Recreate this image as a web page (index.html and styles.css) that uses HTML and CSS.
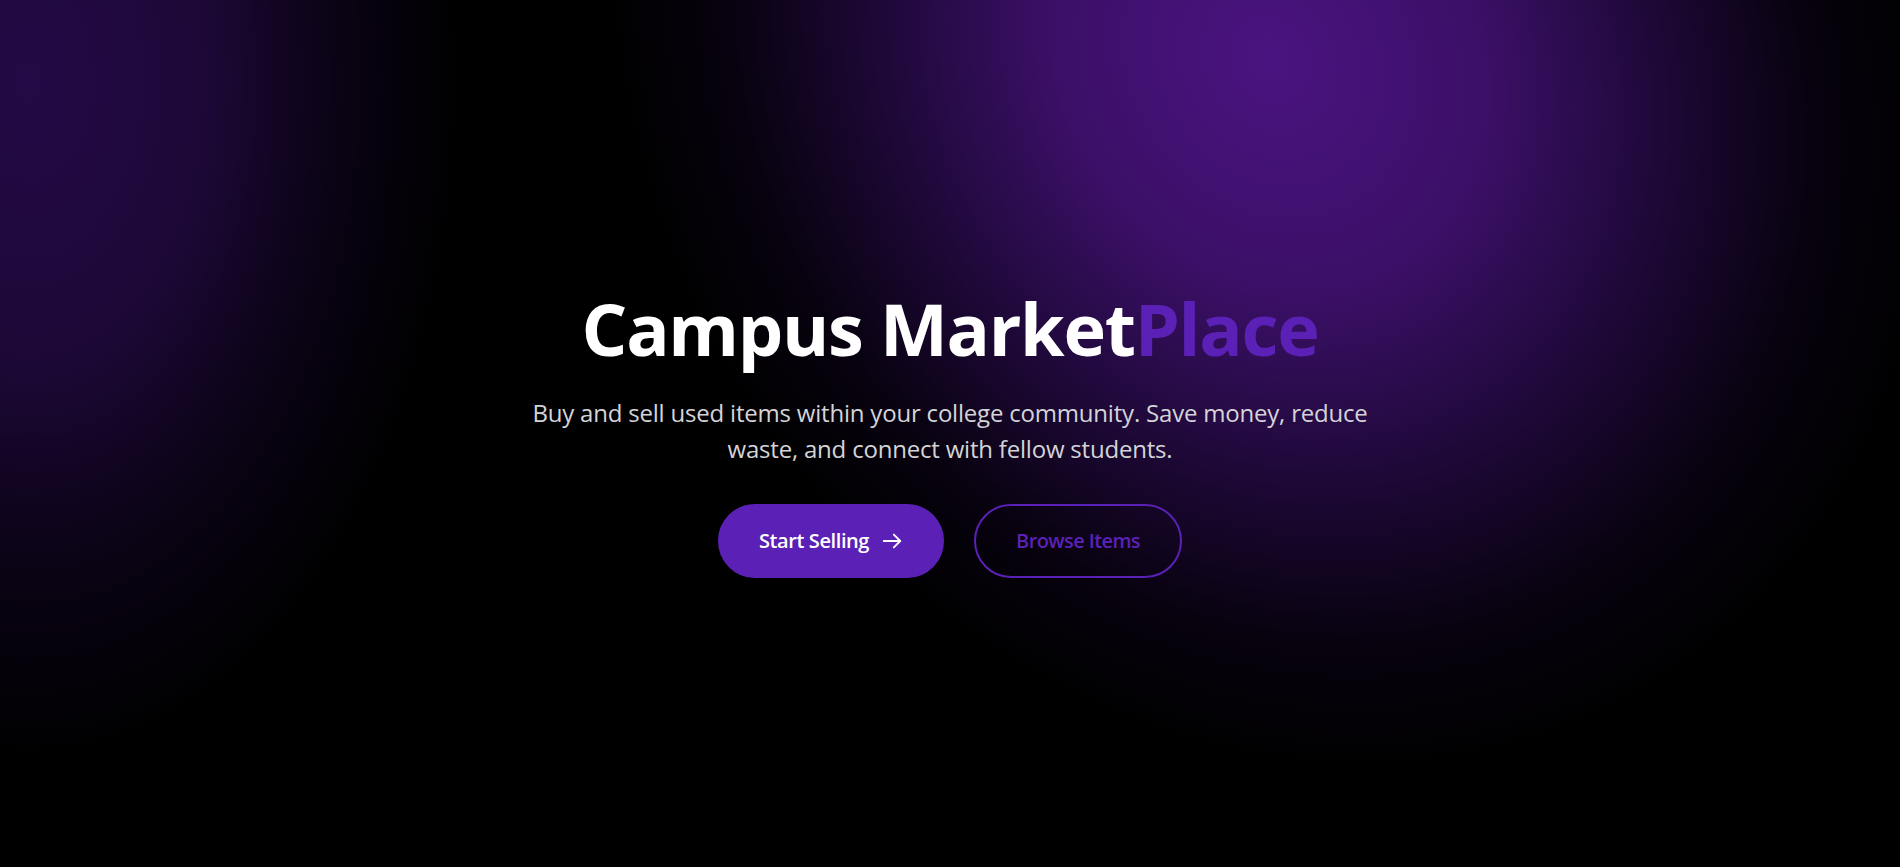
FILE: index.html
```html
<!DOCTYPE html>
<html lang="en">
<head>
<meta charset="utf-8">
<title>Campus MarketPlace</title>
<link rel="stylesheet" href="styles.css">
</head>
<body>
<section class="hero">
  <div class="glow glow-left"></div>
  <div class="glow glow-right"></div>
  <div class="hero-content">
    <h1 class="hero-title">Campus Market<span class="accent">Place</span></h1>
    <p class="hero-text">Buy and sell used items within your college community. Save money, reduce waste, and connect with fellow students.</p>
    <div class="hero-actions">
      <a class="btn btn-primary" href="#">Start Selling
        <svg class="btn-icon" viewBox="0 0 24 24" fill="none" stroke="currentColor" stroke-width="2" stroke-linecap="round" stroke-linejoin="round"><path d="M3 12h18"/><path d="M14 5l7 7-7 7"/></svg>
      </a>
      <a class="btn btn-outline" href="#">Browse Items</a>
    </div>
  </div>
</section>
</body>
</html>
```
FILE: styles.css
```css
* { box-sizing: border-box; }
html, body { margin: 0; padding: 0; }
body {
  background: #000;
  font-family: "Segoe UI", "Open Sans", "Noto Sans", sans-serif;
  color: #fff;
  overflow: hidden;
}
.hero {
  position: relative;
  height: 867px;
  display: flex;
  align-items: center;
  justify-content: center;
  overflow: hidden;
  background: #000;
}
.glow {
  position: absolute;
  pointer-events: none;
  border-radius: 50%;
}
.glow-right {
  left: 640px;
  top: -680px;
  width: 1260px;
  height: 1480px;
  background: radial-gradient(closest-side, rgba(74,20,128,1) 0%, rgba(64,17,112,0.93) 32%, rgba(44,12,82,0.7) 58%, rgba(22,6,42,0.35) 82%, rgba(0,0,0,0) 100%);
  transform: rotate(-32deg);
}
.glow-left {
  left: -400px;
  top: -600px;
  width: 860px;
  height: 1360px;
  background: radial-gradient(closest-side, rgba(36,10,70,1) 0%, rgba(32,9,62,0.9) 40%, rgba(20,6,40,0.55) 70%, rgba(0,0,0,0) 100%);
}
.hero-content {
  position: relative;
  display: flex;
  flex-direction: column;
  align-items: center;
  text-align: center;
}
.hero-title {
  margin: 0 0 26px;
  font-size: 72px;
  line-height: 1.1;
  font-weight: 700;
  letter-spacing: -1.3px;
}
.accent { color: #5b21b6; }
.hero-text {
  margin: 0 0 37px;
  max-width: 860px;
  font-size: 24px;
  line-height: 36px;
  color: #d4d4d8;
  letter-spacing: -0.2px;
}
.hero-actions {
  display: flex;
  gap: 30px;
}
.btn {
  display: inline-flex;
  align-items: center;
  gap: 12px;
  height: 74px;
  padding: 0 39px;
  border-radius: 9999px;
  border: 2px solid #5b21b6;
  font-size: 20px;
  font-weight: 600;
  text-decoration: none;
  letter-spacing: -0.4px;
}
.btn-primary {
  background: #5b21b6;
  color: #fff;
}
.btn-outline {
  background: transparent;
  color: #5b21b6;
  padding: 0 40px;
  letter-spacing: -0.6px;
}
.btn-icon {
  width: 22px;
  height: 22px;
}
```
